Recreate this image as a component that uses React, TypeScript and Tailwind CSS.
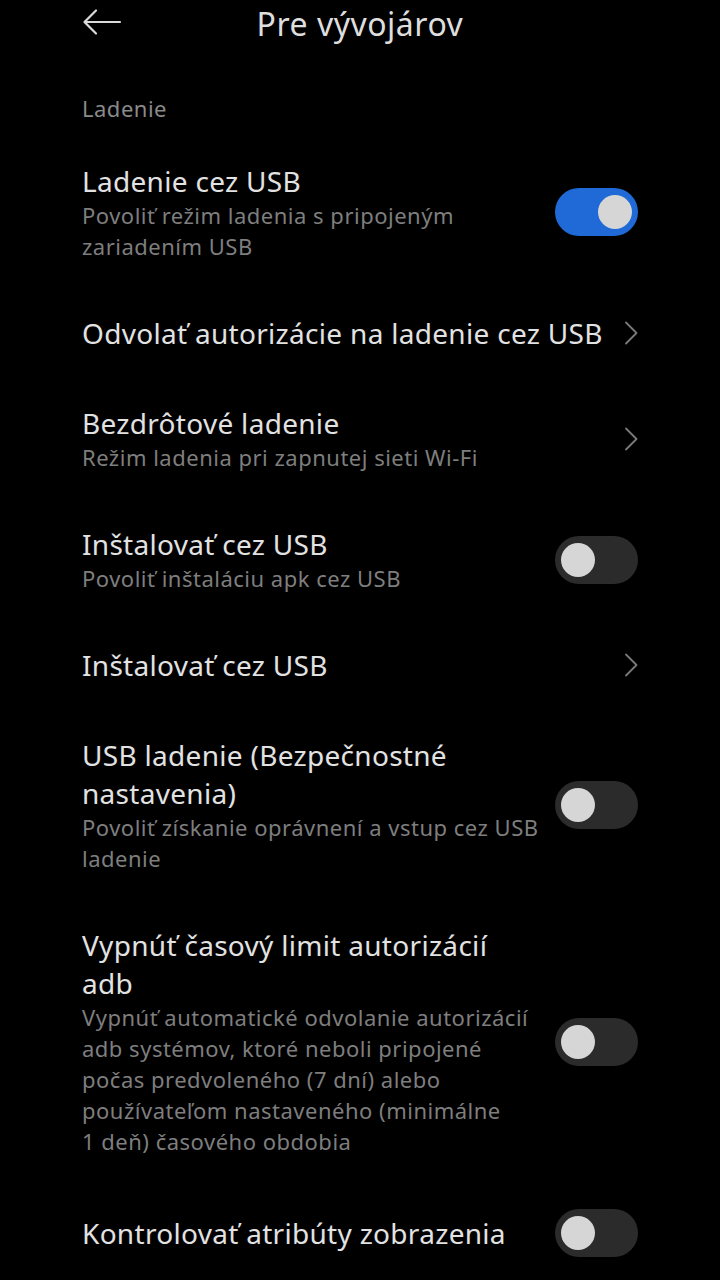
import { ReactNode } from 'react';

function Toggle({ on }: { on?: boolean }) {
	return (
		<div
			className={`flex h-[48px] w-[83px] shrink-0 items-center rounded-full px-[6px] ${
				on ? 'justify-end bg-[#1f6ad6]' : 'justify-start bg-[#2b2b2b]'
			}`}
		>
			<div className="h-[34px] w-[34px] rounded-full bg-[#d6d6d6]" />
		</div>
	);
}

function Chevron() {
	return (
		<svg width="14" height="24" viewBox="0 0 14 24" fill="none" className="shrink-0">
			<path d="M2 1.5 L12.5 12 L2 22.5" stroke="#7a7a7a" strokeWidth="1.8" strokeLinecap="round" strokeLinejoin="round" />
		</svg>
	);
}

function Row({ title, sub, right }: { title: ReactNode; sub?: ReactNode; right: ReactNode }) {
	return (
		<div className="flex items-center gap-[14px] py-[26px]">
			<div className="min-w-0 flex-1">
				<div className="text-[28px] leading-[38px] tracking-[0.3px] text-[#e2e2e2]">{title}</div>
				{sub && <div className="text-[22px] leading-[31px] tracking-[0.5px] text-[#7e7e7e]">{sub}</div>}
			</div>
			{right}
		</div>
	);
}

export default function App() {
	return (
		<div
			className="min-h-[1280px] w-[720px] overflow-hidden bg-black px-[82px]"
			style={{ fontFamily: '"Noto Sans", Roboto, sans-serif' }}
		>
			{/* header */}
			<div className="relative flex h-[48px] items-center justify-center">
				<svg width="40" height="28" viewBox="0 0 40 28" fill="none" className="absolute left-0 top-[8px]">
					<path d="M38 14 H3 M14 2.5 L2.5 14 L14 25.5" stroke="#dadada" strokeWidth="2.2" strokeLinecap="round" strokeLinejoin="round" />
				</svg>
				<div className="text-[32px] leading-[48px] tracking-[0.5px] text-[#dedede]">Pre vývojárov</div>
			</div>

			<div className="mb-[14px] mt-[46px] text-[22px] leading-[28px] tracking-[0.5px] text-[#8a8a8a]">Ladenie</div>

			<Row title="Ladenie cez USB" sub="Povoliť režim ladenia s pripojeným zariadením USB" right={<Toggle on />} />
			<Row title="Odvolať autorizácie na ladenie cez USB" right={<Chevron />} />
			<Row title="Bezdrôtové ladenie" sub="Režim ladenia pri zapnutej sieti Wi-Fi" right={<Chevron />} />
			<Row title="Inštalovať cez USB" sub="Povoliť inštaláciu apk cez USB" right={<Toggle />} />
			<Row title="Inštalovať cez USB" right={<Chevron />} />
			<Row
				title="USB ladenie (Bezpečnostné nastavenia)"
				sub="Povoliť získanie oprávnení a vstup cez USB ladenie"
				right={<Toggle />}
			/>
			<Row
				title="Vypnúť časový limit autorizácií adb"
				sub={'Vypnúť automatické odvolanie autorizácií adb systémov, ktoré neboli pripojené počas predvoleného (7\u00a0dní) alebo používateľom nastaveného (minimálne 1\u00a0deň) časového obdobia'}
				right={<Toggle />}
			/>
			<Row title="Kontrolovať atribúty zobrazenia" right={<Toggle />} />
		</div>
	);
}
